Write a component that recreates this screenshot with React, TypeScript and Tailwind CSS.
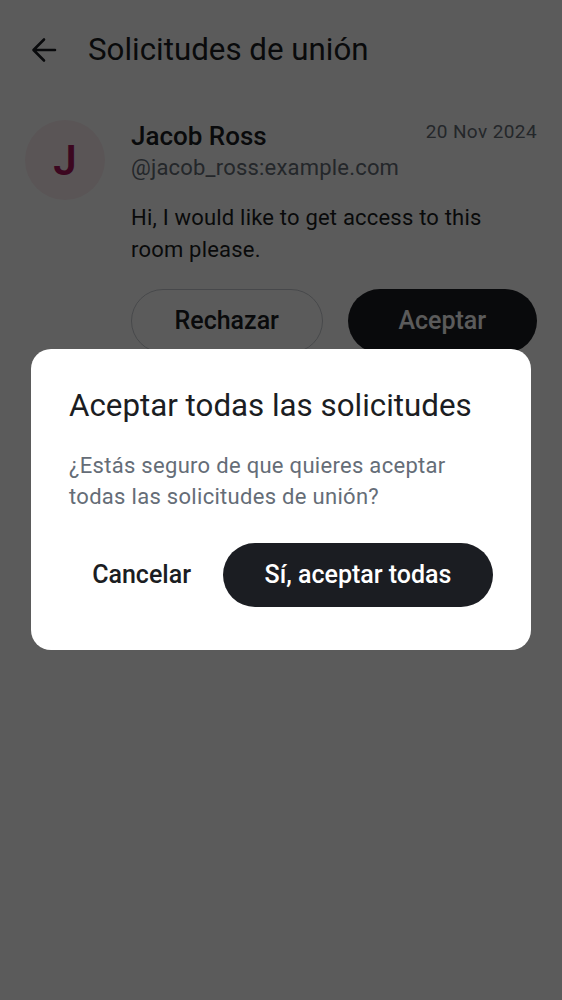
import React from "react"

const font = { fontFamily: "Roboto, 'Noto Sans', sans-serif" }

function BackArrow() {
  return (
    <svg width="28" height="28" viewBox="0 0 28 28" fill="none">
      <path
        d="M25 14H4M14 3.5L3.5 14L14 24.5"
        stroke="#1b1d22"
        strokeWidth="2.6"
        strokeLinecap="round"
        strokeLinejoin="round"
      />
    </svg>
  )
}

function RequestItem() {
  return (
    <div className="flex gap-[26px] px-[25px] pt-[20px]">
      <div className="flex h-[80px] w-[80px] shrink-0 items-center justify-center rounded-full bg-[#fbeef1]">
        <span className="text-[42px] font-semibold text-[#a8145a]">J</span>
      </div>
      <div className="flex flex-1 flex-col">
        <div className="flex items-start justify-between">
          <span className="text-[26px] font-medium leading-[32px] text-[#1b1d22]">
            Jacob Ross
          </span>
          <span className="mt-[-4px] text-[19px] leading-[32px] tracking-[0.4px] text-[#656d77]">
            20 Nov 2024
          </span>
        </div>
        <span className="text-[22px] leading-[32px] tracking-[0.2px] text-[#656d77]">
          @jacob_ross:example.com
        </span>
        <p className="mt-[18px] text-[22px] leading-[32px] tracking-[0.2px] text-[#1b1d22]">
          Hi, I would like to get access to this room please.
        </p>
        <div className="mt-[23px] flex gap-[25px]">
          <button className="h-[64px] flex-1 rounded-full border border-[#c7cbd1] text-[25px] font-medium text-[#1b1d22]">
            Rechazar
          </button>
          <button className="h-[64px] flex-1 rounded-full bg-[#1b1d22] text-[25px] font-medium text-white">
            Aceptar
          </button>
        </div>
      </div>
    </div>
  )
}

export default function App() {
  return (
    <div className="relative h-[1000px] w-[562px] overflow-hidden bg-white" style={font}>
      <div className="flex h-[100px] items-center gap-[30px] pl-[30px]">
        <BackArrow />
        <h1 className="text-[31.3px] leading-[40px] text-[#1b1d22]">
          Solicitudes de unión
        </h1>
      </div>
      <RequestItem />

      <div className="absolute inset-0 bg-black/[0.645]" />

      <div className="absolute left-[31px] top-[349px] w-[500px] rounded-[20px] bg-white px-[38px] pb-[43px] pt-[38px]">
        <h2 className="text-[31.3px] leading-[38px] text-[#1b1d22]">
          Aceptar todas las solicitudes
        </h2>
        <p className="mt-[25px] text-[22px] leading-[31px] tracking-[0.3px] text-[#656d77]">
          ¿Estás seguro de que quieres aceptar todas las solicitudes de unión?
        </p>
        <div className="mt-[31px] flex items-center justify-end gap-[12px]">
          <button className="h-[64px] px-[20px] text-[25px] font-medium text-[#1b1d22]">
            Cancelar
          </button>
          <button className="h-[64px] w-[270px] rounded-full bg-[#1b1d22] text-[25px] font-medium text-white">
            Sí, aceptar todas
          </button>
        </div>
      </div>
    </div>
  )
}
